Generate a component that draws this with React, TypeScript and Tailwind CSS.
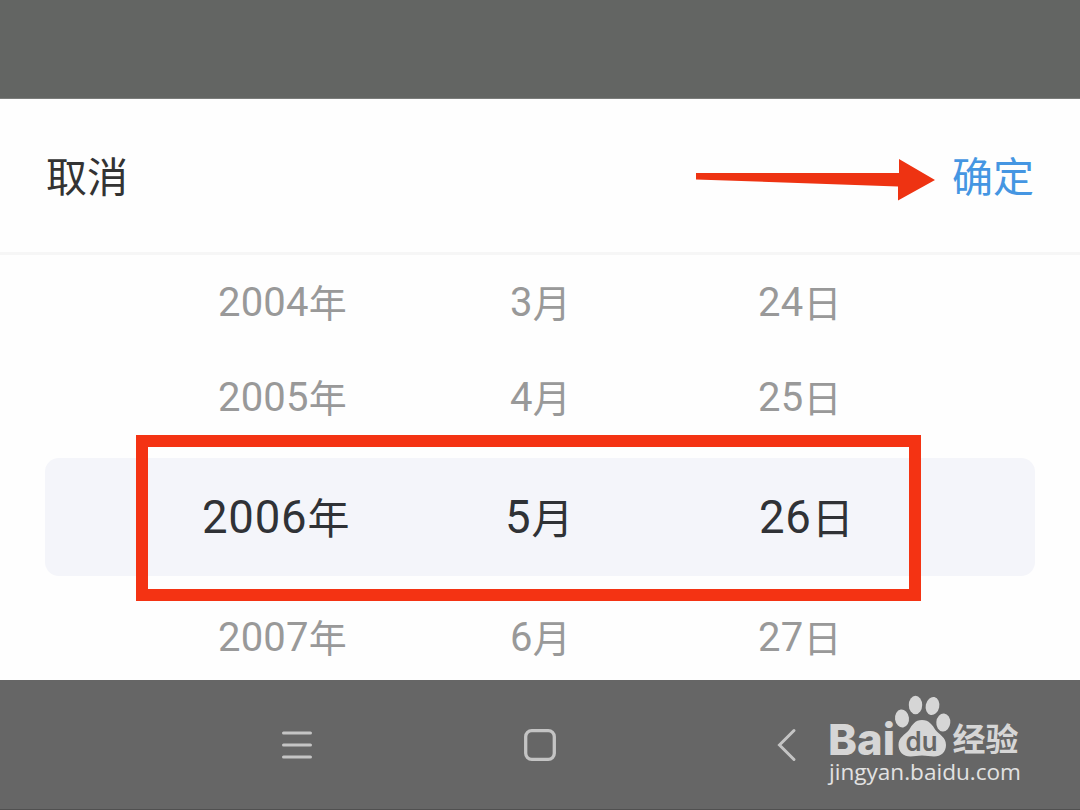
import React from 'react';

interface PickerRow {
  year: string;
  month: string;
  day: string;
}

const rowsBefore: PickerRow[] = [
  { year: '2004', month: '3', day: '24' },
  { year: '2005', month: '4', day: '25' },
];
const selectedRow: PickerRow = { year: '2006', month: '5', day: '26' };
const rowAfter: PickerRow = { year: '2007', month: '6', day: '27' };

interface CellProps {
  value: string;
  unit: string;
  selected?: boolean;
}

const Cell: React.FC<CellProps> = ({ value, unit, selected }) => (
  <div className="flex items-baseline whitespace-nowrap leading-none">
    <span
      className={
        selected
          ? "font-['Roboto',sans-serif] text-[45.5px] tracking-[0.8px]"
          : "font-['Roboto',sans-serif] text-[40px] tracking-[0.2px]"
      }
    >
      {value}
    </span>
    <span
      className={
        selected
          ? "translate-y-px font-['Noto_Sans_CJK_SC',sans-serif] text-[42px] leading-none"
          : "translate-y-px font-['Noto_Sans_CJK_SC',sans-serif] text-[38px] leading-none"
      }
    >
      {unit}
    </span>
  </div>
);

const Row: React.FC<{ row: PickerRow; className: string }> = ({ row, className }) => (
  <div className={`grid shrink-0 grid-cols-[292px_248px_auto] items-center pl-[218px] text-[#999999] ${className}`}>
    <Cell value={row.year} unit="年" />
    <Cell value={row.month} unit="月" />
    <Cell value={row.day} unit="日" />
  </div>
);

const Watermark: React.FC = () => (
  <svg className="absolute left-[820px] top-2.5" width="210" height="104" viewBox="820 690 210 104">
    <g fill="#d6d6d6">
      <text x="828" y="754.500" textLength="67" lengthAdjust="spacingAndGlyphs" className="font-['Inter',sans-serif] text-[43px] font-extrabold">
        Bai
      </text>
      <ellipse cx="902" cy="718.500" rx="7" ry="9" transform="rotate(-8 902 718.5)" />
      <ellipse cx="915.500" cy="705" rx="6.700" ry="9.300" />
      <ellipse cx="932.500" cy="706" rx="6.800" ry="9.200" transform="rotate(12 932.5 706)" />
      <ellipse cx="943.300" cy="722.500" rx="7" ry="9" transform="rotate(5 943.3 722.5)" />
      <path d="M922 720c-7 0-10 5-13 10-4 5-10.500 7-10.500 15 0 7 5 11.500 12 11.500 4 0 7-1 11.500-1s8 1 12 1c7 0 12-4.500 12-11.500 0-8-6.500-10-10.500-15-3-5-6.500-10-13.500-10z" />
      <text x="952.500" y="751" textLength="66" lengthAdjust="spacingAndGlyphs" className="font-['Noto_Sans_CJK_SC',sans-serif] text-[32px] font-bold">
        经验
      </text>
    </g>
    <text x="905.500" y="750.500" textLength="32" lengthAdjust="spacingAndGlyphs" fill="#666666" className="font-['Inter',sans-serif] text-[27px] font-semibold">
      du
    </text>
    <text x="829" y="780" textLength="192" lengthAdjust="spacingAndGlyphs" fill="#e2e2e2" className="font-['Open_Sans',sans-serif] text-[22.5px] font-medium">
      jingyan.baidu.com
    </text>
  </svg>
);

export default function App() {
  return (
    <div className="flex h-[810px] w-[1080px] flex-col overflow-hidden bg-[#fefefe]">
      <div className="h-[99px] shrink-0 border-b border-[#7b7d7b] bg-[#636563]" />

      {/* Header */}
      <header className="flex h-[153px] shrink-0 items-center px-[46px] font-['Noto_Sans_CJK_SC',sans-serif] text-[41px] leading-none">
        <button className="pb-0.5 text-[#333333]">取消</button>
        <svg className="ml-auto mr-4 mt-1.5" width="240" height="44" viewBox="0 0 240 44">
          <path d="M0 16H203V2L239 23 202 43.500V29.500L0 22.500z" fill="#ee3312" />
        </svg>
        <button className="pb-0.5 text-[#4596e2]">确定</button>
      </header>

      {/* Date wheel */}
      <main className="relative flex h-[428px] shrink-0 flex-col overflow-hidden border-t-3 border-[#f6f6f6]">
        <Row row={rowsBefore[0]} className="h-[94px]" />
        <Row row={rowsBefore[1]} className="h-[96px]" />
        <div className="mx-[45px] mt-[13px] grid h-[118px] shrink-0 grid-cols-[303px_254px_auto] items-center rounded-[14px] bg-[#f4f5fa] pl-[157px] text-[#303236]">
          <Cell value={selectedRow.year} unit="年" selected />
          <Cell value={selectedRow.month} unit="月" selected />
          <Cell value={selectedRow.day} unit="日" selected />
        </div>
        <Row row={rowAfter} className="mt-[17px] h-[87px]" />
        <div className="absolute left-[136px] top-[180px] h-[166px] w-[785px] border-12 border-[#f43313]" />
      </main>

      {/* System navigation bar */}
      <nav className="relative flex h-[130px] items-center border-b border-[#505050] bg-[#666666]">
        <svg className="ml-[281px]" width="32" height="32" viewBox="0 0 32 32" stroke="#c4c4c4" strokeWidth="3" strokeLinecap="round">
          <path d="M2.500 4H29.500M2.500 16H29.500M2.500 28H29.500" />
        </svg>
        <svg className="ml-[210px]" width="34" height="34" viewBox="0 0 34 34" fill="none" stroke="#c4c4c4" strokeWidth="3.300">
          <rect x="2.700" y="2.700" width="28.600" height="28.600" rx="6" />
        </svg>
        <svg className="ml-[220px]" width="22" height="34" viewBox="0 0 22 34" fill="none" stroke="#c4c4c4" strokeWidth="3" strokeLinecap="round">
          <path d="M17 2.500L2.500 17 17 31.500" />
        </svg>
        <Watermark />
      </nav>
    </div>
  );
}
